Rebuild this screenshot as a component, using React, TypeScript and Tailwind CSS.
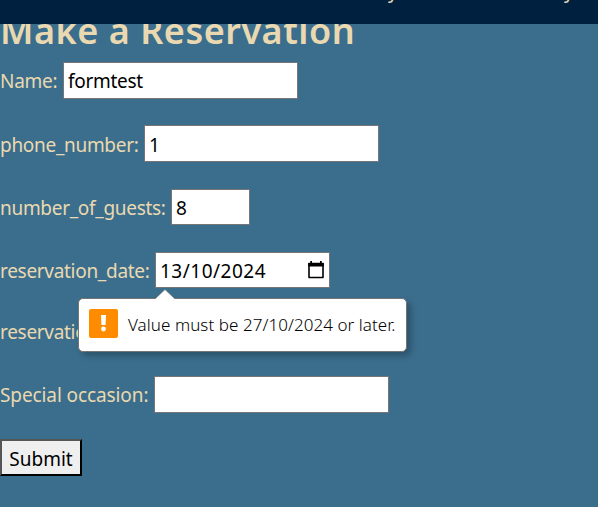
import type { ReactNode } from 'react';

function Row({ label, labelClass, rowClass, children }: {
  label: string;
  labelClass: string;
  rowClass: string;
  children?: ReactNode;
}) {
  return (
    <div className={`flex shrink-0 items-center ${rowClass}`}>
      <label className={`shrink-0 whitespace-nowrap ${labelClass}`}>{label}</label>
      {children}
    </div>
  );
}

function Calendar() {
  return (
    <svg viewBox="0 0 18 20" className="mr-[4px] h-[20px] w-[18px] shrink-0" fill="none">
      <path d="M2 3.5H16V17.5H2Z" stroke="#000" strokeWidth="1.6" strokeLinejoin="round" />
      <path d="M1.2 3H16.8V6.5H1.2ZM3.3 1H5V4H3.3ZM13 1H14.7V4H13Z" fill="#000" />
    </svg>
  );
}

function ValidationBubble() {
  return (
    <div className="absolute left-[78px] top-[298px] flex h-[54px] w-[329px] items-center rounded-[5px] border border-[#757575] bg-white pl-[10px] shadow-[4px_4px_6px_rgba(0,0,0,0.25)]">
      <svg viewBox="0 0 22 11" className="absolute left-[75px] top-[-10px] h-[11px] w-[22px]">
        <path d="M1 10L11 .5L21 10V11H1Z" fill="#fff" />
        <path d="M1 10L11 .5L21 10" fill="none" stroke="#757575" strokeWidth=".7" />
      </svg>
      <svg viewBox="0 0 29 29" className="mb-[3px] h-[29px] w-[29px] shrink-0">
        <rect width="29" height="29" rx="2" fill="#ff8c00" />
        <path d="M12 6H17L16.6 16H12.4Z" fill="#fff" />
        <circle cx="14.5" cy="20" r="2.4" fill="#fff" />
      </svg>
      <span className="ml-[10px] whitespace-nowrap text-[17px] font-light tracking-[0.06px] text-black">
        Value must be 27/10/2024 or later.
      </span>
    </div>
  );
}

export default function App() {
  const field = 'flex shrink-0 items-center border border-[#767676] bg-white pl-[4px] text-black outline-none';
  return (
    <div className="relative flex h-[507px] w-[598px] flex-col overflow-hidden bg-[#3b6e8d] font-['Noto_Sans','Open_Sans',sans-serif] text-[19px] leading-[28px] text-[#ead9b0]">
      <header className="relative z-10 flex h-6 shrink-0 overflow-hidden bg-[#00203f] pl-[388px] text-[19px] leading-[20px]">
        <span className="mt-[-19px] w-[176px]">y</span>
        <span className="mt-[-19px]">y</span>
      </header>
      <h1 className="mt-[-18px] h-[50px] shrink-0 whitespace-nowrap text-[36px] font-semibold leading-[50px] tracking-[0.52px]">
        Make a Reservation
      </h1>
      <form className="flex flex-col items-start" onSubmit={(e) => e.preventDefault()}>
        <Row label="Name:" labelClass="w-[63px] tracking-[-0.3px]" rowClass="mt-[6px] h-[37px]">
          <input className={`${field} h-[37px] w-[235px] tracking-[-0.3px]`} defaultValue="formtest" />
        </Row>
        <Row label="phone_number:" labelClass="w-[144px] pt-[2px] tracking-[-0.3px]" rowClass="mt-[26px] h-[37px]">
          <input className={`${field} h-[37px] w-[235px] pt-[2px]`} defaultValue="1" />
        </Row>
        <Row label="number_of_guests:" labelClass="w-[171px] pt-px tracking-[-0.3px]" rowClass="mt-[27px] h-[36px]">
          <input className={`${field} h-[36px] w-[79px] pt-px`} defaultValue="8" />
        </Row>
        <Row label="reservation_date:" labelClass="w-[155px] pt-px tracking-[-0.3px]" rowClass="mt-[27px] h-[36px]">
          <div className={`${field} h-[36px] w-[175px] justify-between`}>
            <span className="pt-px tracking-[0.5px]">13/10/2024</span>
            <Calendar />
          </div>
        </Row>
        <Row label="reservation_time:" labelClass="w-[155px] tracking-[-0.3px]" rowClass="mt-[30px] h-[28px]" />
        <Row label="Special occasion:" labelClass="w-[154px] tracking-[-0.1px]" rowClass="mt-[30px] h-[37px]">
          <input className={`${field} h-[37px] w-[235px]`} />
        </Row>
        <button className="mt-[26px] h-[37px] w-[82px] border-2 border-b-black border-l-[#555] border-r-black border-t-[#555] bg-[#efefef] pt-[2px] text-black">
          Submit
        </button>
      </form>
      <ValidationBubble />
    </div>
  );
}
